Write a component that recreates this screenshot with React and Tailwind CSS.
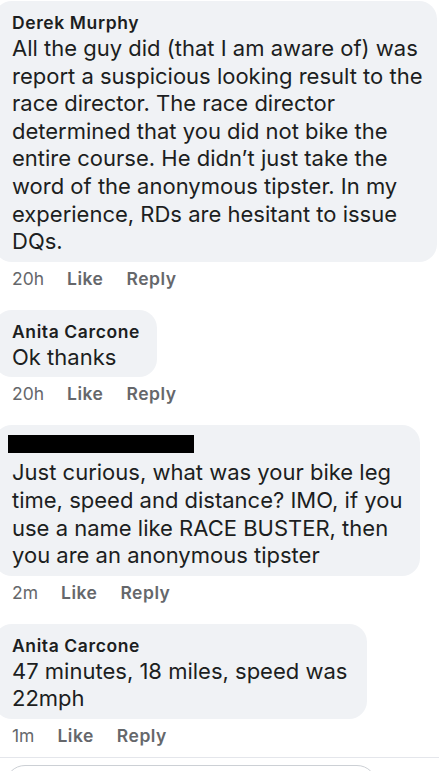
const comments = [
    {
        name: 'Derek Murphy',
        width: 'w-[443px]',
        lines: [
            'All the guy did (that I am aware of) was',
            'report a suspicious looking result to the',
            'race director. The race director',
            'determined that you did not bike the',
            'entire course. He didn\u2019t just take the',
            'word of the anonymous tipster. In my',
            'experience, RDs are hesitant to issue',
            'DQs.',
        ],
        time: '20h',
    },
    {
        name: 'Anita Carcone',
        width: 'w-[163px]',
        lines: ['Ok thanks'],
        time: '20h',
    },
    {
        name: null,
        width: 'w-[426px]',
        lines: [
            'Just curious, what was your bike leg',
            'time, speed and distance? IMO, if you',
            'use a name like RACE BUSTER, then',
            'you are an anonymous tipster',
        ],
        time: '2m',
    },
    {
        name: 'Anita Carcone',
        width: 'w-[373px]',
        lines: ['47 minutes, 18 miles, speed was', '22mph'],
        time: '1m',
    },
];

function Comment({ comment, last }) {
    return (
        <div className={last ? '' : 'mb-[21px]'}>
            {/* Bubble */}
            <div className={`${comment.width} -ml-[6px] pl-[18px] pt-[10px] pb-[6px] rounded-[18px] bg-[#f0f2f5]`}>
                {comment.name ? (
                    <div className="text-[17.5px] leading-[24px] font-semibold tracking-[0.6px] text-[#1c1e21]">
                        {comment.name}
                    </div>
                ) : (
                    <div className="h-[24px]">
                        <div className="-ml-[4px] w-[186px] h-[18px] bg-black" />
                    </div>
                )}
                <div className="text-[22px] leading-[27.6px] whitespace-nowrap text-[#1c1e21]">
                    {comment.lines.map((line, i) => (
                        <div key={i}>{line}</div>
                    ))}
                </div>
            </div>

            {/* Actions */}
            <div className="mt-[7px] pl-[12px] flex gap-[23px] text-[17.5px] leading-[20px] text-[#65676b]">
                <span>{comment.time}</span>
                <span className="font-semibold tracking-[0.5px]">Like</span>
                <span className="font-semibold tracking-[0.5px]">Reply</span>
            </div>
        </div>
    );
}

export default function App() {
    return (
        <div className="min-h-screen bg-white pt-px overflow-hidden font-['Inter',sans-serif]">
            {comments.map((c, i) => (
                <Comment key={i} comment={c} last={i === comments.length - 1} />
            ))}

            {/* Divider + input */}
            <div className="mt-[11px] border-t border-[#e4e6eb]" />
            <div className="mt-[7px] ml-[5px] w-[372px] h-[40px] rounded-[20px] border border-[#ccd0d5]" />
        </div>
    );
}
